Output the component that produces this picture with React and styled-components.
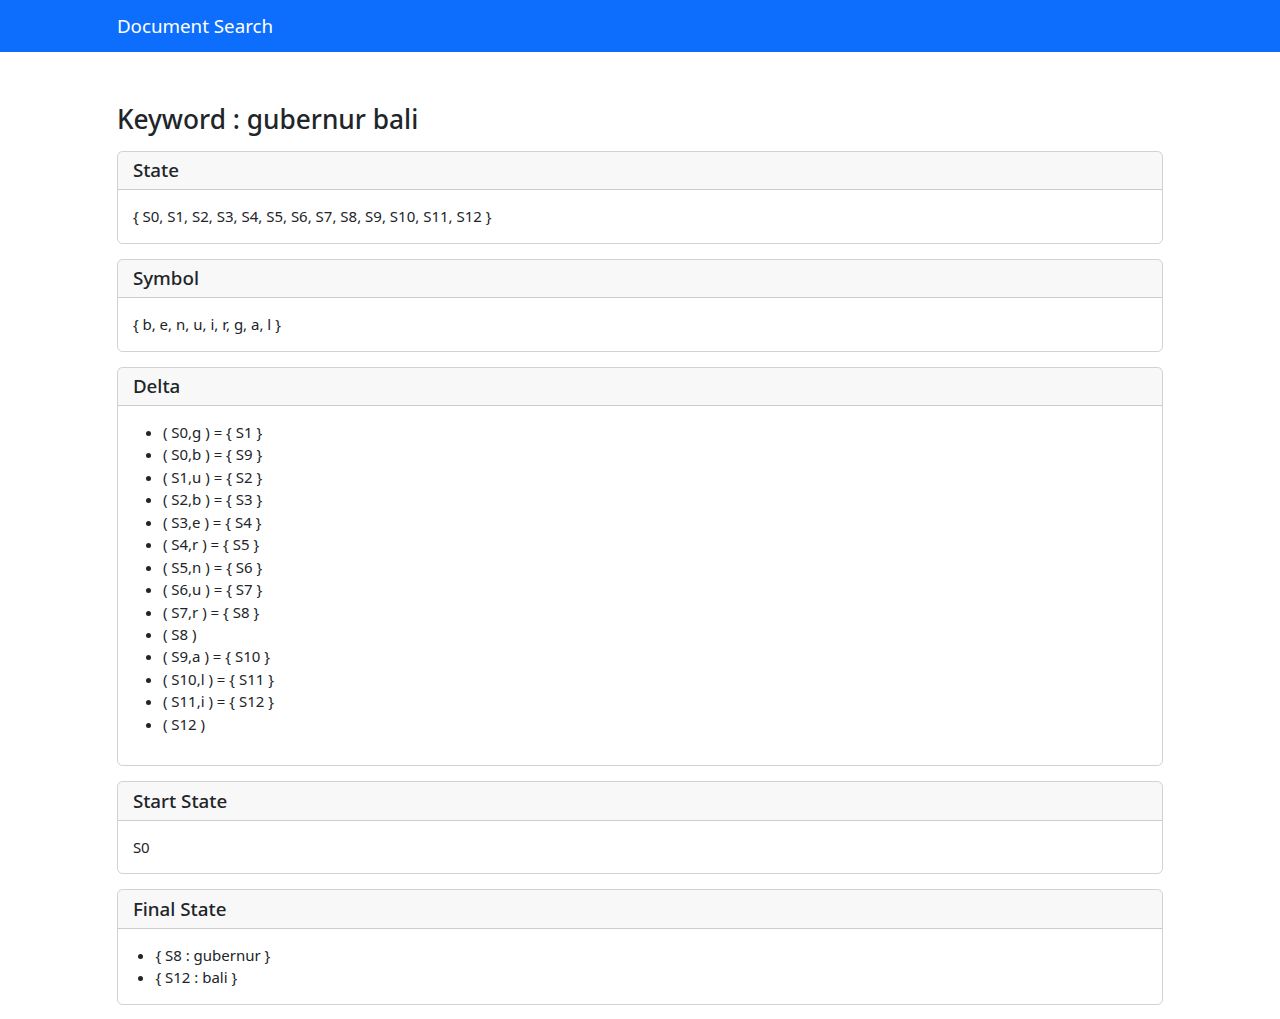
import React from "react";
import styled, { createGlobalStyle } from "styled-components";

const GlobalStyle = createGlobalStyle`
  *, *::before, *::after { box-sizing: border-box; }
  html, body { margin: 0; padding: 0; }
  body {
    font-family: "Noto Sans", "Open Sans", "Liberation Sans", sans-serif;
    font-size: 15px;
    line-height: 1.5;
    color: #212529;
    background: #fff;
  }
`;

const Navbar = styled.nav`
  background: #0d6efd;
  padding: 7.5px 0;
  height: 52px;
`;

const Container = styled.div`
  width: 1068.75px;
  margin: 0 auto;
  padding: 0 11.25px;
`;

const Main = styled(Container)`
  padding-top: 52px;
  padding-bottom: 15px;
`;

const Brand = styled.a`
  display: inline-block;
  font-size: 18.75px;
  line-height: 28px;
  padding: 4.5px 0;
  color: #fff;
  text-decoration: none;
`;

const Title = styled.h3`
  margin: 0 0 15px;
  font-size: 26.25px;
  font-weight: 500;
  line-height: 1.2;
`;

const Card = styled.section`
  border: 1px solid rgba(0, 0, 0, 0.175);
  border-radius: 5.625px;
  margin-bottom: 15px;
  overflow: hidden;
`;

const CardHeader = styled.div`
  background: rgba(33, 37, 41, 0.03);
  border-bottom: 1px solid rgba(0, 0, 0, 0.175);
  padding: 7.5px 15px;
`;

const CardTitle = styled.h5`
  margin: 0;
  font-size: 18.75px;
  font-weight: 500;
  line-height: 1.2;
`;

const CardBody = styled.div`
  padding: 15px;
`;

const List = styled.ul`
  margin: 0 0 ${(p) => (p.$tight ? "0" : "15px")};
  padding-left: ${(p) => (p.$indent ? `${p.$indent}px` : "30px")};
`;

const Item = styled.li`
  line-height: 22.43px;
`;

const delta = [
  "( S0,g ) = { S1 }",
  "( S0,b ) = { S9 }",
  "( S1,u ) = { S2 }",
  "( S2,b ) = { S3 }",
  "( S3,e ) = { S4 }",
  "( S4,r ) = { S5 }",
  "( S5,n ) = { S6 }",
  "( S6,u ) = { S7 }",
  "( S7,r ) = { S8 }",
  "( S8 )",
  "( S9,a ) = { S10 }",
  "( S10,l ) = { S11 }",
  "( S11,i ) = { S12 }",
  "( S12 )",
];

function Panel({ title, children }) {
  return (
    <Card>
      <CardHeader>
        <CardTitle>{title}</CardTitle>
      </CardHeader>
      <CardBody>{children}</CardBody>
    </Card>
  );
}

export default function App() {
  return (
    <>
      <GlobalStyle />
      <Navbar>
        <Container>
          <Brand href="#">Document Search</Brand>
        </Container>
      </Navbar>
      <Main>
        <Title>Keyword : gubernur bali</Title>
        <Panel title="State">{"{ S0, S1, S2, S3, S4, S5, S6, S7, S8, S9, S10, S11, S12 }"}</Panel>
        <Panel title="Symbol">{"{ b, e, n, u, i, r, g, a, l }"}</Panel>
        <Panel title="Delta">
          <List>
            {delta.map((d) => (
              <Item key={d}>{d}</Item>
            ))}
          </List>
        </Panel>
        <Panel title="Start State">S0</Panel>
        <Panel title="Final State">
          <List $tight $indent={22.5}>
            <Item>{"{ S8 : gubernur }"}</Item>
            <Item>{"{ S12 : bali }"}</Item>
          </List>
        </Panel>
      </Main>
    </>
  );
}
